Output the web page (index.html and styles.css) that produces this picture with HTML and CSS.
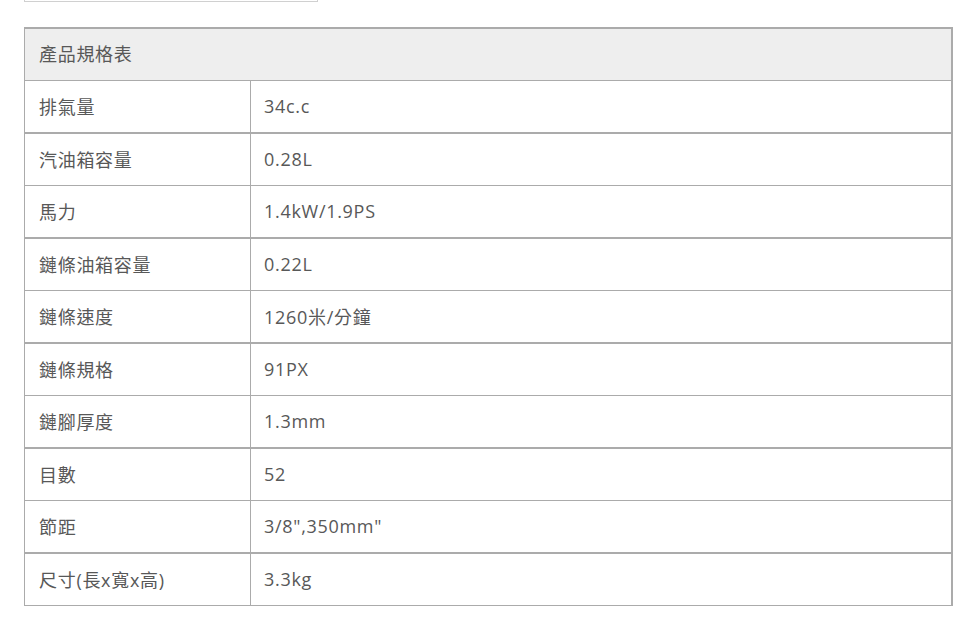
FILE: index.html
```html
<!DOCTYPE html>
<html lang="zh-Hant">
<head>
<meta charset="utf-8">
<title>產品規格表</title>
<link rel="stylesheet" href="styles.css">
</head>
<body>
<div class="page">
  <div class="topbox"></div>
  <div class="spec">
    <div class="spec-head">產品規格表</div>
    <div class="row"><div class="k">排氣量</div><div class="v">34c.c</div></div>
    <div class="row"><div class="k">汽油箱容量</div><div class="v">0.28L</div></div>
    <div class="row"><div class="k">馬力</div><div class="v">1.4kW/1.9PS</div></div>
    <div class="row"><div class="k">鏈條油箱容量</div><div class="v">0.22L</div></div>
    <div class="row"><div class="k">鏈條速度</div><div class="v">1260米/分鐘</div></div>
    <div class="row"><div class="k">鏈條規格</div><div class="v">91PX</div></div>
    <div class="row"><div class="k">鏈腳厚度</div><div class="v">1.3mm</div></div>
    <div class="row"><div class="k">目數</div><div class="v">52</div></div>
    <div class="row"><div class="k">節距</div><div class="v">3/8",350mm"</div></div>
    <div class="row"><div class="k">尺寸(長x寬x高)</div><div class="v">3.3kg</div></div>
  </div>
</div>
</body>
</html>
```
FILE: styles.css
```css
html, body {
  margin: 0;
  padding: 0;
  background: #fff;
}
.page {
  padding: 0 0 0 24px;
  font-family: "Open Sans", "Noto Sans CJK TC", sans-serif;
  font-size: 18px;
  letter-spacing: 0.7px;
  color: #585858;
}
.topbox {
  width: 292px;
  height: 1px;
  border: 1px solid #d0d0d0;
  border-top: none;
}
.spec {
  margin-top: 25px;
  width: 926px;
  border-top: 2px solid #ababab;
  border-left: 1px solid #ababab;
  border-right: 2px solid #ababab;
}
.spec-head {
  height: 51px;
  box-sizing: border-box;
  display: flex;
  align-items: center;
  padding: 0 0 3px 14px;
  background: #eeeeee;
  border-bottom: 1px solid #ababab;
  height: 52px;
}
.row {
  display: grid;
  grid-template-columns: 226px 1fr;
  height: 51px;
  border-bottom: 1px solid #ababab;
}
.row:nth-of-type(even) {
  border-bottom-width: 2px;
}
.k, .v {
  display: flex;
  align-items: center;
  padding: 0 0 2px 14px;
}
.k {
  padding-left: 14px;
  border-right: 1px solid #ababab;
}
.v {
  padding-left: 13px;
}
```
